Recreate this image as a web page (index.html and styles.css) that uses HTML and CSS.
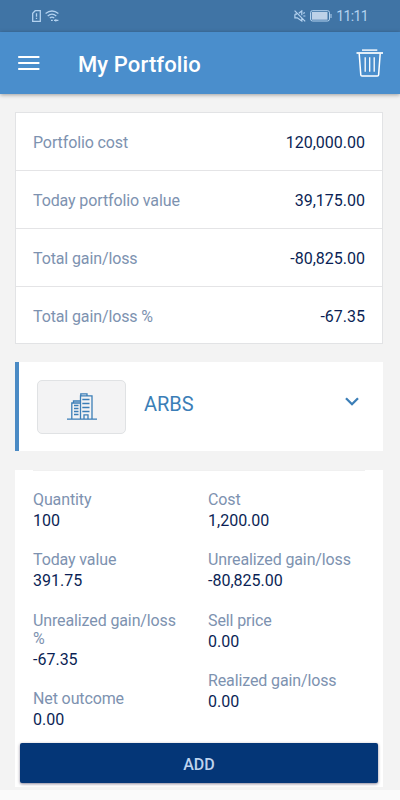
FILE: index.html
```html
<!DOCTYPE html>
<html lang="en">
<head>
    <meta charset="UTF-8">
    <meta name="viewport" content="width=device-width, initial-scale=1.0">
    <title>My Portfolio</title>
    <link rel="stylesheet" href="styles.css">
</head>
<body>
    <div class="status-bar">
        <svg class="sim-icon" width="9" height="12" viewBox="0 0 9 12">
            <path d="M3.2.7H8.3V11.3H.7V3.2Z"/>
            <path d="M4.5 3.2V6.7M4.5 7.8V9"/>
        </svg>
        <svg class="wifi-icon" width="14" height="12" viewBox="0 0 14 12">
            <path d="M.6 3.6Q7-1.6 13.4 3.6M2.7 5.9Q7 2.3 11.3 5.9M4.8 8.1Q7 6.2 9.2 8.1"/>
            <path d="M6 10.4H7.8M9 10.4H13.4M10.8 9.3V11.5"/>
        </svg>
        <svg class="mute-icon" width="12" height="12" viewBox="0 0 12 12">
            <path d="M.9 4.2V7.8H3.2L7.8 11V7.8M4.8 3.2L7.8.9V5.3M.9 4.2H3M.6.6L11.2 11.4M9.3 6H11.4M9.3 3.6L10.8 2.6"/>
        </svg>
        <svg class="battery-icon" width="22" height="12" viewBox="0 0 22 12">
            <rect class="battery-case" x=".5" y=".7" width="19" height="10.3" rx="2"/>
            <rect class="battery-level" x="1.8" y="2" width="15.7" height="7.7"/>
            <path d="M21 4V8"/>
        </svg>
        <span class="clock">11:11</span>
    </div>

    <header class="toolbar">
        <svg class="menu-icon" width="22" height="16" viewBox="0 0 22 16">
            <path d="M.2 2H21.4M.2 8H21.4M.2 14H21.4"/>
        </svg>
        <h1 class="title">My Portfolio</h1>
        <svg class="trash-icon" width="28" height="28" viewBox="0 0 28 28">
            <path d="M6 1.1H21.3" stroke-width="1.4"/>
            <path d="M.5 4H27" stroke-width="1.7"/>
            <path d="M3.2 4.5L4.8 26Q4.9 27.1 6 27.1H21.4Q22.5 27.1 22.6 26L24.2 4.5" stroke-width="1.5"/>
            <path d="M9.2 8.2V22.8M13.7 8.2V22.8M18.2 8.2V22.8" stroke-width="1.3"/>
        </svg>
    </header>

    <main class="content">
        <section class="summary">
            <div class="summary-row"><span class="label">Portfolio cost</span><span class="value">120,000.00</span></div>
            <div class="summary-row"><span class="label">Today portfolio value</span><span class="value">39,175.00</span></div>
            <div class="summary-row"><span class="label">Total gain/loss</span><span class="value">-80,825.00</span></div>
            <div class="summary-row"><span class="label">Total gain/loss %</span><span class="value">-67.35</span></div>
        </section>

        <section class="stock">
            <div class="stock-logo">
                <svg class="building-icon" width="30" height="27" viewBox="0 0 30 27">
                    <path d="M0 26.2H30M4.8 26V10H13M6.5 9.8V8H13M13.5 26V2.8H25V26M13.8 2.8V.8H20V2.8"/>
                    <path d="M7 12.5H11.5M7 15.5H11.5M7 18.5H11.5M7 21.5H11.5M15.3 6.5H22.5M15.3 10.5H22.5M15.3 14.5H22.5M15.3 18.5H22.5"/>
                    <path d="M17 26V21.8H21V26"/>
                </svg>
            </div>
            <span class="stock-name">ARBS</span>
            <svg class="chevron" width="14" height="9" viewBox="0 0 14 9">
                <path d="M1 1.2L7 7.2L13 1.2"/>
            </svg>
        </section>

        <section class="details">
            <div class="column">
                <div class="item"><div class="label">Quantity</div><div class="value">100</div></div>
                <div class="item"><div class="label">Today value</div><div class="value">391.75</div></div>
                <div class="item"><div class="label">Unrealized gain/loss %</div><div class="value">-67.35</div></div>
                <div class="item"><div class="label">Net outcome</div><div class="value">0.00</div></div>
            </div>
            <div class="column">
                <div class="item"><div class="label">Cost</div><div class="value">1,200.00</div></div>
                <div class="item"><div class="label">Unrealized gain/loss</div><div class="value">-80,825.00</div></div>
                <div class="item"><div class="label">Sell price</div><div class="value">0.00</div></div>
                <div class="item"><div class="label">Realized gain/loss</div><div class="value">0.00</div></div>
            </div>
        </section>
        <div class="actions">
            <button class="add-button">ADD</button>
        </div>
    </main>
</body>
</html>
```
FILE: styles.css
```css
* {
    box-sizing: border-box;
}
body {
    margin: 0;
    height: 800px;
    overflow: hidden;
    font-family: Roboto, sans-serif;
    font-size: 16px;
    background-color: #fafafa;
}
svg {
    flex: none;
    fill: none;
    stroke: currentColor;
}
.status-bar {
    display: flex;
    align-items: center;
    height: 32px;
    padding: 0 32px;
    background-color: #4074a5;
    color: #b3d2f0;
}
.sim-icon {
    stroke-width: 1.3;
}
.wifi-icon {
    margin-left: 4px;
    stroke-width: 1.3;
}
.mute-icon {
    margin-left: auto;
    stroke-width: 1.2;
}
.battery-icon {
    margin: 0 4px;
}
.battery-level {
    fill: #bdd1e8;
    stroke: none;
}
.clock {
    font-size: 14px;
    letter-spacing: -0.6px;
}
.toolbar {
    position: relative;
    display: flex;
    align-items: center;
    height: 62px;
    padding: 0 16px 0 18px;
    background-color: #4a8ecc;
    color: #fff;
    box-shadow: 0 1px 4px rgba(0, 0, 0, 0.35);
}
.menu-icon {
    stroke-width: 2;
}
.title {
    margin: 3px auto 0 38px;
    font-size: 22px;
    font-weight: 500;
    letter-spacing: 0.12px;
}
.content {
    height: 696px;
    padding: 18px 17px 0 15px;
    background-color: #f3f3f3;
}
.summary {
    border: 1px solid #e2e3e5;
    background-color: #fff;
}
.summary-row {
    display: flex;
    align-items: center;
    justify-content: space-between;
    height: 58.2px;
    padding: 1px 17px 0;
}
.summary-row:first-child {
    height: 57px;
}
.summary-row:last-child {
    height: 57px;
    padding-top: 2px;
}
.summary-row + .summary-row {
    border-top: 1px solid #e4e4e6;
}
.label {
    color: #7d92b0;
    letter-spacing: -0.12px;
}
.value {
    color: #0b1f55;
}
.stock {
    display: flex;
    align-items: center;
    height: 89px;
    margin-top: 18px;
    padding: 0 24px 0 18px;
    border-left: 4px solid #4a8ac4;
    background-color: #fff;
    color: #3b7eb7;
}
.stock-logo {
    display: flex;
    align-items: center;
    justify-content: center;
    width: 89px;
    height: 54px;
    border: 1px solid #e0e2e4;
    border-radius: 5px;
    background-color: #f3f3f4;
}
.building-icon {
    stroke-width: 1.3;
}
.stock-name {
    margin: -5px auto 0 18px;
    font-size: 20px;
}
.chevron {
    margin-top: -11px;
    stroke-width: 2.3;
}
.details {
    display: flex;
    height: 273px;
    margin-top: 19px;
    padding: 20.3px 0 0 18px;
    background: linear-gradient(#f0f0f0, #f0f0f0) 18px 0 / 332px 1px no-repeat #fff;
}
.column {
    flex: none;
    width: 175px;
    padding-right: 25px;
    line-height: 18px;
}
.column:last-child {
    padding-right: 0;
}
.item {
    margin-bottom: 21.5px;
}
.item .value {
    margin-top: 3px;
}
.actions {
    height: 44px;
    padding: 0 5px;
    background-color: #fff;
}
.add-button {
    display: block;
    width: 100%;
    height: 40px;
    padding: 2px 0 0;
    border: none;
    border-radius: 2px;
    background-color: #043677;
    box-shadow: 0 1px 3px rgba(20, 10, 50, 0.5);
    color: #bfd3ee;
    font-family: inherit;
    font-size: 16px;
    font-weight: 500;
}
```
